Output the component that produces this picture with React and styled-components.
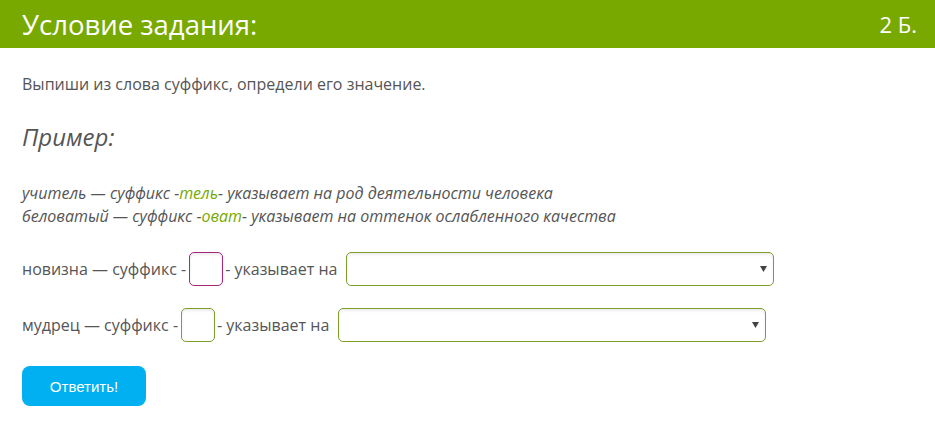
import styled, { createGlobalStyle } from "styled-components"

const GlobalStyle = createGlobalStyle`
  body {
    margin: 0;
    background: #fff;
    font-family: "Open Sans", "Liberation Sans", sans-serif;
  }
`

const App = () => {
  return (
    <>
      <GlobalStyle />
      <StTask>
        <StHeader>
          <StTitle>Условие задания:</StTitle>
          <StPoints>2 Б.</StPoints>
        </StHeader>

        <StBody>
          <StInstruction>Выпиши из слова суффикс, определи его значение.</StInstruction>

          <StExampleTitle>Пример:</StExampleTitle>

          <StExample>
            учитель — суффикс -<StMark>тель</StMark>- указывает на род деятельности человека
            <br />
            беловатый — суффикс -<StMark>оват</StMark>- указывает на оттенок ослабленного качества
          </StExample>

          <StRow>
            новизна — суффикс -<StSuffixInput $active />- указывает на
            <StSelect>
              <option></option>
            </StSelect>
          </StRow>

          <StRow>
            мудрец — суффикс -<StSuffixInput />- указывает на
            <StSelect>
              <option></option>
            </StSelect>
          </StRow>

          <StButton>Ответить!</StButton>
        </StBody>
      </StTask>
    </>
  )
}

//-----styled-components-----

// карточка задания
const StTask = styled.div`
  width: 935px;
`

// зелёная шапка
const StHeader = styled.div`
  height: 48px;
  padding: 0 18px 0 22px;
  background: #78a900;
  color: #fff;
  display: flex;
  align-items: center;
  justify-content: space-between;
`

const StTitle = styled.h2`
  margin: 0;
  font-size: 27.5px;
  font-weight: 400;
`

const StPoints = styled.span`
  font-size: 22px;
`

// содержимое
const StBody = styled.div`
  padding: 24px 22px 0;
  color: #555;
`

const StInstruction = styled.p`
  margin: 0;
  font-size: 16px;
  line-height: 24px;
`

const StExampleTitle = styled.h3`
  margin: 25px 0 0;
  font-size: 24px;
  font-style: italic;
  font-weight: 400;
  line-height: 32px;
`

const StExample = styled.p`
  margin: 29px 0 0;
  font-size: 16px;
  font-style: italic;
  line-height: 23px;
`

const StMark = styled.span`
  color: #78a900;
`

// строка с ответом
const StRow = styled.div`
  margin-top: 24px;
  display: flex;
  align-items: center;
  font-size: 16px;
  white-space: pre;

  & + & {
    margin-top: 22px;
  }
`

const StSuffixInput = styled.input`
  box-sizing: border-box;
  width: 34px;
  height: 34px;
  margin: 0 2px 0 3px;
  border: 1px solid ${({ $active }) => ($active ? "#a8267a" : "#7f9f2c")};
  border-radius: 5px;
  box-shadow: inset 0 2px 3px rgba(0, 0, 0, 0.08);
  background: #fff;
`

const StSelect = styled.select`
  box-sizing: border-box;
  width: 428px;
  height: 34px;
  margin-left: 9px;
  padding: 0 6px;
  border: 1px solid #7f9f2c;
  border-radius: 5px;
  box-shadow: inset 0 2px 3px rgba(0, 0, 0, 0.08);
  background: #fff;
  appearance: none;
  background-image: url("data:image/svg+xml;utf8,<svg xmlns='http://www.w3.org/2000/svg' width='7' height='6'><path d='M0 0h7L3.5 6z' fill='%23444'/></svg>");
  background-repeat: no-repeat;
  background-position: right 6px center;
`

const StButton = styled.button`
  margin-top: 24px;
  width: 124px;
  height: 40px;
  border: none;
  border-radius: 8px;
  background: #00b0f0;
  color: #fff;
  font-family: "Liberation Sans", Arial, sans-serif;
  font-size: 15px;
  cursor: pointer;
`

export default App
